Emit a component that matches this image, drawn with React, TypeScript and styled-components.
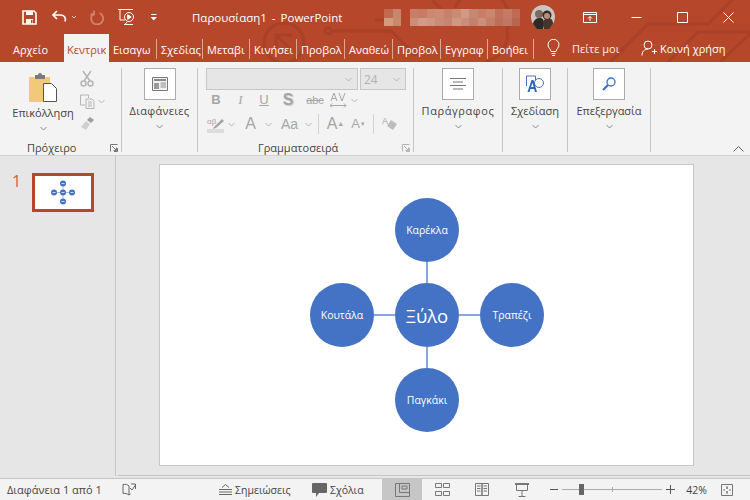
import React from "react";
import styled, { createGlobalStyle } from "styled-components";

const Global = createGlobalStyle`
  html, body { margin: 0; padding: 0; width: 750px; height: 500px; overflow: hidden; }
  body { font-family: "Open Sans", "Noto Sans", "Liberation Sans", sans-serif; font-size: 11px; color: #444; }
`;

const Window = styled.div`
  width: 750px;
  height: 500px;
  overflow: hidden;
  display: flex;
  flex-direction: column;
  background: #e6e6e6;
`;

const Head = styled.div`
  position: relative;
  height: 62px;
  flex: none;
  background: #b7472a;
  overflow: hidden;
`;
const Pattern = styled.svg`
  position: absolute;
  left: 0;
  top: 0;
`;
const TitleBar = styled.div`
  position: relative;
  height: 34px;
  display: flex;
  align-items: center;
  color: #fff;
`;
const Quick = styled.div<{ $gap: number }>`
  margin-left: ${(p) => p.$gap}px;
  flex: none;
  display: flex;
  align-items: center;
`;
const Title = styled.div`
  width: 192px;
  flex: none;
  margin-left: 34px;
  font-size: 11.5px;
  word-spacing: 2px;
  white-space: nowrap;
`;
const Blur = styled.svg`
  flex: none;
  margin-right: 11px;
`;
const Avatar = styled.svg`
  flex: none;
  margin-right: 12px;
`;
const WinBtn = styled.div`
  width: 46px;
  flex: none;
  display: flex;
  justify-content: center;
`;
const TabRow = styled.div`
  position: relative;
  height: 28px;
  display: flex;
  align-items: stretch;
  color: #fff;
`;
const FileTab = styled.div`
  width: 64px;
  padding-left: 13px;
  box-sizing: border-box;
  line-height: 31px;
  font-size: 11px;
`;
const Tab = styled.div<{ $w: number; $active?: boolean }>`
  width: ${(p) => p.$w}px;
  flex: none;
  box-sizing: border-box;
  overflow: hidden;
  white-space: nowrap;
  padding-left: ${(p) => (p.$active ? 3 : 4)}px;
  line-height: 31px;
  font-size: 11px;
  position: relative;
  background: ${(p) => (p.$active ? "#f3f3f3" : "transparent")};
  color: ${(p) => (p.$active ? "#b7472a" : "#fff")};
  &::after {
    content: "";
    position: absolute;
    right: 0;
    top: 5px;
    bottom: 3px;
    width: 1px;
    background: ${(p) => (p.$active ? "transparent" : "#e0a594")};
  }
`;
const Tell = styled.div`
  margin-left: 13px;
  display: flex;
  align-items: center;
  gap: 12px;
  width: 94px;
  flex: none;
  color: #fbeeea;
  white-space: nowrap;
`;
const Share = styled.div`
  display: flex;
  align-items: center;
  gap: 3px;
  white-space: nowrap;
`;

const Ribbon = styled.div`
  height: 94px;
  flex: none;
  box-sizing: border-box;
  background: #f3f3f3;
  border-bottom: 1px solid #d2d2d2;
  display: flex;
  position: relative;
  padding-top: 6px;
`;
const Group = styled.div<{ $w: number }>`
  width: ${(p) => p.$w}px;
  height: 84px;
  flex: none;
  box-sizing: border-box;
  border-right: 1px solid #c6c6c6;
  position: relative;
  display: flex;
  flex-direction: column;
  align-items: center;
`;
const BoxIcon = styled.div`
  width: 32px;
  height: 32px;
  box-sizing: border-box;
  background: #fff;
  border: 1px solid #ababab;
  display: flex;
  align-items: center;
  justify-content: center;
  flex: none;
`;
const BigLabel = styled.div<{ $track?: number }>`
  margin-top: 3px;
  line-height: 16px;
  font-size: 11px;
  letter-spacing: ${(p) => p.$track ?? 0}px;
  color: #444;
  white-space: nowrap;
`;
const LabelGap = styled.div<{ $h: number }>`
  height: ${(p) => p.$h}px;
  flex: none;
`;
const Chevron = styled.svg`
  display: block;
  flex: none;
`;
const GroupName = styled.div<{ $left: number }>`
  position: absolute;
  left: ${(p) => p.$left}px;
  bottom: -4px;
  line-height: 16px;
  font-size: 11px;
  color: #444;
  white-space: nowrap;
`;
const Launcher = styled.svg`
  position: absolute;
  right: 3px;
  bottom: 0;
`;
const ClipRow = styled.div`
  display: flex;
  width: 100%;
`;
const PasteCol = styled.div`
  width: 78px;
  margin-left: 4px;
  margin-right: -2px;
  display: flex;
  flex-direction: column;
  align-items: center;
  padding-top: 4px;
`;
const SmallCol = styled.div`
  display: flex;
  flex-direction: column;
  align-items: flex-start;
  gap: 7px;
  padding-top: 2px;
`;
const SmallRow = styled.div`
  display: flex;
  align-items: center;
  gap: 3px;
`;
const FontRows = styled.div`
  width: 100%;
  box-sizing: border-box;
  padding-left: 8px;
`;
const Combos = styled.div`
  display: flex;
  gap: 2px;
`;
const Combo = styled.div<{ $w: number }>`
  width: ${(p) => p.$w}px;
  height: 22px;
  box-sizing: border-box;
  background: #e6e6e6;
  border: 1px solid #c6c6c6;
  display: flex;
  align-items: center;
  justify-content: space-between;
  padding: 0 5px 0 3px;
  color: #b1b1b1;
  font-size: 12px;
`;
const ToolRow = styled.div<{ $h: number }>`
  height: ${(p) => p.$h}px;
  display: flex;
  align-items: center;
  color: #a6a6a6;
`;
const Tool = styled.div<{ $w: number; $size?: number }>`
  width: ${(p) => p.$w}px;
  flex: none;
  text-align: center;
  display: flex;
  justify-content: center;
  align-items: center;
  font-size: ${(p) => p.$size ?? 13}px;
  font-family: "Liberation Sans", sans-serif;
  line-height: 16px;
`;
const Struck = styled.span`
  font-size: 11px;
  text-decoration: line-through;
`;
const SerifItalic = styled.i`
  font-family: "Liberation Serif", serif;
`;
const Shadowed = styled.b`
  text-shadow: 1px 1px 1px #c9c9c9;
`;
const Mark = styled.sup<{ $size: number }>`
  font-size: ${(p) => p.$size}px;
`;
const ToolSpace = styled.div<{ $w: number }>`
  width: ${(p) => p.$w}px;
  flex: none;
`;
const ToolSep = styled.div`
  width: 1px;
  height: 20px;
  background: #d2d2d2;
  flex: none;
`;
const Collapse = styled.svg`
  position: absolute;
  right: 6px;
  bottom: 3px;
`;

const Body = styled.div`
  flex: 1;
  display: flex;
  min-height: 0;
`;
const Thumbs = styled.div`
  width: 116px;
  flex: none;
  box-sizing: border-box;
  border-right: 1px solid #c6c6c6;
  display: flex;
  align-items: flex-start;
  padding-top: 17px;
  height: 320px;
`;
const SlideNo = styled.div`
  width: 32px;
  box-sizing: border-box;
  padding-left: 12px;
  font-size: 16px;
  line-height: 16px;
  color: #cf6044;
`;
const Thumb = styled.div`
  width: 62px;
  height: 39px;
  box-sizing: border-box;
  border: 3px solid #b7472a;
  background: #fff;
  display: flex;
  align-items: center;
  justify-content: center;
`;
const Stage = styled.div`
  flex: 1;
  padding: 8px 0 0 43px;
  display: flex;
  flex-direction: column;
  align-items: flex-start;
`;
const Slide = styled.div`
  width: 535px;
  height: 302px;
  box-sizing: border-box;
  flex: none;
  background: #fff;
  border: 1px solid #c6c6c6;
  display: flex;
  justify-content: center;
  padding-top: 33px;
  padding-left: 1px;
`;
const Diagram = styled.div`
  position: relative;
  width: 234px;
  height: 234px;
  flex: none;
`;
const Link = styled.div<{ $x: number; $y: number; $w: number; $h: number }>`
  position: absolute;
  left: ${(p) => p.$x}px;
  top: ${(p) => p.$y}px;
  width: ${(p) => p.$w}px;
  height: ${(p) => p.$h}px;
  background: #8aa5d8;
`;
const Node = styled.div<{ $x: number; $y: number; $big?: boolean }>`
  position: absolute;
  left: ${(p) => p.$x}px;
  top: ${(p) => p.$y}px;
  width: 64px;
  height: 64px;
  border-radius: 50%;
  background: #4472c4;
  color: #fff;
  display: flex;
  align-items: center;
  justify-content: center;
  font-size: ${(p) => (p.$big ? 18.5 : 10.5)}px;
`;
const ScrollRule = styled.div`
  height: 1px;
  margin-top: 9px;
  margin-left: -41px;
  width: 632px;
  background: #c6c6c6;
  flex: none;
`;
const Status = styled.div`
  height: 22px;
  flex: none;
  box-sizing: border-box;
  border-top: 1px solid #c6c6c6;
  background: #f3f3f3;
  display: flex;
  align-items: center;
  font-size: 10.5px;
  color: #444;
`;
const StatusText = styled.div<{ $w: number; $size?: number; $pad?: number; $end?: boolean }>`
  width: ${(p) => p.$w}px;
  flex: none;
  box-sizing: border-box;
  white-space: nowrap;
  display: flex;
  align-items: center;
  gap: 3px;
  font-size: ${(p) => p.$size ?? 10.5}px;
  padding-left: ${(p) => p.$pad ?? 0}px;
  justify-content: ${(p) => (p.$end ? "flex-end" : "flex-start")};
`;
const View = styled.div<{ $active?: boolean }>`
  width: 40px;
  height: 21px;
  flex: none;
  display: flex;
  align-items: center;
  justify-content: center;
  background: ${(p) => (p.$active ? "#c6c6c6" : "transparent")};
`;
const ZoomOut = styled.svg`
  margin-left: 8px;
  flex: none;
`;
const Slider = styled.div`
  position: relative;
  width: 100px;
  height: 1px;
  background: #ababab;
  flex: none;
  margin: 0 4px;
`;
const SliderThumb = styled.div`
  position: absolute;
  left: 17px;
  top: -5px;
  width: 5px;
  height: 11px;
  background: #666;
`;
const SliderTick = styled.div`
  position: absolute;
  left: 50px;
  top: -2px;
  width: 1px;
  height: 5px;
  background: #ababab;
`;
const FitIcon = styled.svg`
  margin-left: 14px;
  flex: none;
`;

const Down = ({ c = "#8a8a8a" }: { c?: string }) => (
  <Chevron width="7" height="5" viewBox="0 0 7 5">
    <path d="M.5 1l3 3 3-3" fill="none" stroke={c} />
  </Chevron>
);

const Corner = ({ c }: { c: string }) => (
  <Launcher width="8" height="8" viewBox="0 0 8 8" fill="none" stroke={c}>
    <path d="M.5 7.500v-7h7M2 2l4.500 4.500M3.500 6.500h3v-3M7.500 4v3.500H4" />
  </Launcher>
);

const blurCells = [
  "#c06a4f", "#c8856c", "#b7472a", "#c87f68", "#c97a62", "#cc8873", "#cd8b76", "#c9806a",
  "#cc8a74", "#d09a87", "#c98673", "#c87d67", "#cb8672", "#c17059", "#c47a65", "#be6a54",
  "#d29a7e", "#c98a6c", "#b7472a", "#cd8d79", "#d09b88", "#cf9582", "#cb8a76", "#c9846f",
  "#cf9885", "#cb8d7a", "#c6816c", "#cb8f7c", "#c67e69", "#be6f5a", "#c17763", "#b96650",
];

const tabs: [string, number, boolean?][] = [
  ["Κεντρικ", 45, true],
  ["Εισαγω", 48],
  ["Σχεδίας", 46],
  ["Μεταβι", 47],
  ["Κινήσει", 47],
  ["Προβολ", 48],
  ["Αναθεώ", 48],
  ["Προβολ", 48],
  ["Εγγραφ", 47],
  ["Βοήθει", 46],
];

export default function App() {
  return (
    <Window>
      <Global />
      <Head>
        <Pattern width="750" height="62" viewBox="0 0 750 62" fill="none" stroke="#a84127" strokeWidth="3">
          <circle cx="284" cy="43" r="20" />
          <path d="M276 51V35h16M277 36l15 15" />
          <circle cx="328" cy="31" r="3" />
          <path d="M331 31h60l25 25M375 20h50M432 0l20 20M455 8a28 28 0 0 1 52 22 28 28 0 0 1-22 32" />
          <path d="M610 62l38-38h60l30-30M668 62l30-30h52M720 62l30-28" />
        </Pattern>
        <TitleBar>
          <Quick $gap={22}>
            <svg width="15" height="15" viewBox="0 0 15 15">
              <path d="M1 1h11l2 2v11H1z" fill="none" stroke="#fff" strokeWidth="1.6" />
              <path d="M4 1h7v4H4zM4 9h7v5H4z" fill="#fff" />
              <path d="M9 10h1.5v3H9z" fill="#b7472a" />
            </svg>
          </Quick>
          <Quick $gap={14}>
            <svg width="26" height="16" viewBox="0 0 26 16" fill="none" stroke="#fff">
              <path d="M6 2L2 6l4 4M2 6h8a4.5 4.5 0 0 1 4 6.5" strokeWidth="1.7" />
              <path d="M21 7l2 2 2-2" stroke="#e7c2b6" />
            </svg>
          </Quick>
          <Quick $gap={13}>
            <svg width="15" height="15" viewBox="0 0 15 15" fill="none" stroke="#d2846f" strokeWidth="1.8">
              <path d="M9.5 3A6 6 0 1 1 4 3.4M4 .5v4H.5" />
            </svg>
          </Quick>
          <Quick $gap={13}>
            <svg width="19" height="19" viewBox="0 0 19 19" fill="none" stroke="#fff">
              <path d="M0 1.5h15M2 2v10h5M6 16.5h9" />
              <circle cx="11" cy="9" r="4.5" />
              <path d="M9.7 6.7l3.5 2.3-3.5 2.3z" fill="#fff" />
              <path d="M9 14l-2 2.5" />
            </svg>
          </Quick>
          <Quick $gap={13}>
            <svg width="8" height="8" viewBox="0 0 8 8">
              <path d="M1 1h5.5v1H1zM.5 4h6.500L3.700 7.500z" fill="#fff" />
            </svg>
          </Quick>
          <Title>Παρουσίαση1 - PowerPoint</Title>
          <Blur width="136" height="17" viewBox="0 0 136 17" shapeRendering="crispEdges">
            {blurCells.map((c, i) => (
              <rect key={i} x={(i % 16) * 8.5} y={Math.floor(i / 16) * 8.5} width="8.5" height="8.5" fill={c} />
            ))}
          </Blur>
          <Avatar width="24" height="24" viewBox="0 0 24 24">
            <circle cx="12" cy="12" r="12" fill="#c9c6c3" />
            <path d="M2 19c1-5 4-6 7-6 3 0 4 2 4 6l-1 5H6z" fill="#2d2926" />
            <path d="M12 20c0-5 2-7 5-7s5 2 5 6l-4 5h-5z" fill="#46352c" />
            <circle cx="8" cy="9" r="4" fill="#7c6a5d" />
            <circle cx="16" cy="10" r="4.5" fill="#3b2a23" />
            <circle cx="16" cy="11" r="3" fill="#b98e7a" />
          </Avatar>
          <WinBtn>
            <svg width="14" height="11" viewBox="0 0 14 11" fill="none" stroke="#fff">
              <path d="M.5.5h13v10H.5zM.5 2.5h13M7 9V4.5M5 6.5l2-2 2 2" />
            </svg>
          </WinBtn>
          <WinBtn>
            <svg width="11" height="11" viewBox="0 0 11 11">
              <path d="M.5 5.5h10" stroke="#fff" />
            </svg>
          </WinBtn>
          <WinBtn>
            <svg width="11" height="11" viewBox="0 0 11 11">
              <path d="M.5.5h10v10H.5z" fill="none" stroke="#fff" />
            </svg>
          </WinBtn>
          <WinBtn>
            <svg width="11" height="11" viewBox="0 0 11 11">
              <path d="M.5.5l10 10M10.5.5l-10 10" stroke="#fff" />
            </svg>
          </WinBtn>
        </TitleBar>
        <TabRow>
          <FileTab>Αρχείο</FileTab>
          {tabs.map(([name, w, active], i) => (
            <Tab key={i} $w={w} $active={active}>
              {name}
            </Tab>
          ))}
          <Tell>
            <svg width="13" height="18" viewBox="0 0 13 18" fill="none" stroke="#fff">
              <path d="M4 12.5C4 10 1 9 1 5.8a5.5 5.5 0 0 1 11 0C12 9 9 10 9 12.5zM4.5 14.5h4M5 16.5h3" />
            </svg>
            Πείτε μοι
          </Tell>
          <Share>
            <svg width="16" height="16" viewBox="0 0 16 16" fill="none" stroke="#fff">
              <circle cx="7" cy="5" r="4" />
              <path d="M1 15.5c0-4 2-6 6-6.500M11 11.500h5M13.500 9v5" />
            </svg>
            Κοινή χρήση
          </Share>
        </TabRow>
      </Head>

      <Ribbon>
        <Group $w={122}>
          <ClipRow>
            <PasteCol>
              <svg width="28" height="30" viewBox="0 0 28 30">
                <path d="M0 5h21v25H0z" fill="#f2c879" />
                <path d="M6 3h3a2 2 0 0 1 4 0h3v4H6z" fill="#7b7b7b" />
                <path d="M14.500 11.500h8l5 5v13h-13z" fill="#fff" stroke="#555" />
              </svg>
              <BigLabel>Επικόλληση</BigLabel>
              <LabelGap $h={5} />
              <Down />
            </PasteCol>
            <SmallCol>
              <SmallRow>
                <svg width="14" height="17" viewBox="0 0 14 17" fill="none" stroke="#b5b5b5" strokeWidth="1.500">
                  <path d="M3 1l7 10M11 1L4 11" />
                  <circle cx="3.500" cy="13.500" r="2.500" />
                  <circle cx="10.500" cy="13.500" r="2.500" />
                </svg>
              </SmallRow>
              <SmallRow>
                <svg width="15" height="15" viewBox="0 0 15 15" fill="none" stroke="#b5b5b5">
                  <path d="M.5 1h8v3M.5 1v10H5M6 5h6l2 2v7.500H6zM8 8h4M8 10h4M8 12h4" />
                </svg>
                <Down c="#b5b5b5" />
              </SmallRow>
              <SmallRow>
                <svg width="16" height="15" viewBox="0 0 16 15">
                  <path d="M10 1l4 3-3 3-4-3z" fill="#9f9f9f" />
                  <path d="M6 5l4 3-4 6-5-3z" fill="#d0d0d0" />
                </svg>
              </SmallRow>
            </SmallCol>
          </ClipRow>
          <GroupName $left={27}>Πρόχειρο</GroupName>
          <Corner c="#777" />
        </Group>

        <Group $w={76}>
          <BoxIcon>
            <svg width="16" height="14" viewBox="0 0 16 14">
              <path d="M.5.5h15v13H.5z" fill="#f3f3f3" stroke="#777" />
              <path d="M2 2h12v2H2z" fill="#888" />
              <path d="M2 6h5v6H2z" fill="#999" />
              <path d="M8.500 6H14M8.500 8H14M8.500 10H14" stroke="#888" />
            </svg>
          </BoxIcon>
          <BigLabel $track={0.3}>Διαφάνειες</BigLabel>
          <LabelGap $h={5} />
          <Down />
        </Group>

        <Group $w={216}>
          <FontRows>
            <Combos>
              <Combo $w={152}>
                <span />
                <Down c="#b5b5b5" />
              </Combo>
              <Combo $w={46}>
                24
                <Down c="#b5b5b5" />
              </Combo>
            </Combos>
            <ToolRow $h={20}>
              <Tool $w={20}>
                <b>B</b>
              </Tool>
              <Tool $w={29}>
                <SerifItalic>I</SerifItalic>
              </Tool>
              <Tool $w={18}>
                <u>U</u>
              </Tool>
              <Tool $w={30} $size={16}>
                <Shadowed>S</Shadowed>
              </Tool>
              <Tool $w={24}>
                <Struck>abc</Struck>
              </Tool>
              <Tool $w={22}>
                <svg width="17" height="16" viewBox="0 0 17 16" fill="none" stroke="#a6a6a6">
                  <path d="M1 9l3-8 3 8M2 6.500h4M9 1l3 8 3-8M0 13.500h16M2 11.500l-2 2 2 2M14 11.500l2 2-2 2" />
                </svg>
              </Tool>
              <ToolSpace $w={2} />
              <Down c="#b5b5b5" />
            </ToolRow>
            <ToolRow $h={28}>
              <Tool $w={20}>
                <svg width="18" height="17" viewBox="0 0 18 17">
                  <text x="0" y="8" fontSize="8" fill="#a6a6a6" fontFamily="Liberation Sans">αβ</text>
                  <path d="M7 11L15 3l2 2-8 7-3 1z" fill="#a6a6a6" />
                  <path d="M0 13h17v4H0z" fill="#dcdcdc" />
                </svg>
              </Tool>
              <Tool $w={11}>
                <Down c="#b5b5b5" />
              </Tool>
              <Tool $w={27} $size={16}>
                A
              </Tool>
              <Tool $w={9}>
                <Down c="#b5b5b5" />
              </Tool>
              <Tool $w={33} $size={14}>
                Aa
              </Tool>
              <Tool $w={4}>
                <Down c="#b5b5b5" />
              </Tool>
              <ToolSpace $w={8} />
              <ToolSep />
              <Tool $w={33} $size={16}>
                A<Mark $size={7}>▲</Mark>
              </Tool>
              <Tool $w={13}>
                A<Mark $size={6}>▼</Mark>
              </Tool>
              <ToolSpace $w={8} />
              <ToolSep />
              <Tool $w={32}>
                <svg width="16" height="16" viewBox="0 0 16 16">
                  <text x="0" y="8" fontSize="9" fill="#a6a6a6" fontFamily="Liberation Sans">A</text>
                  <path d="M9 4l6 4-4 6-6-4z" fill="#bdbdbd" />
                </svg>
              </Tool>
            </ToolRow>
          </FontRows>
          <GroupName $left={60}>Γραμματοσειρά</GroupName>
          <Corner c="#b5b5b5" />
        </Group>

        <Group $w={89}>
          <BoxIcon>
            <svg width="16" height="12" viewBox="0 0 16 12" stroke="#777">
              <path d="M0 .5h16M3 4h10M0 7.500h16M3 11h10" />
            </svg>
          </BoxIcon>
          <BigLabel $track={0.6}>Παράγραφος</BigLabel>
          <LabelGap $h={5} />
          <Down />
        </Group>

        <Group $w={65}>
          <BoxIcon>
            <svg width="18" height="18" viewBox="0 0 18 18">
              <path d="M.5 1h9v4M.5 1v10" fill="none" stroke="#4472c4" />
              <circle cx="13" cy="8" r="4.500" fill="#fff" stroke="#4472c4" />
              <path d="M1.500 17L5.500 5h2L11 17H9l-.8-3H4.400l-.8 3zM5 12h2.600L6.500 8z" fill="#2f65b8" />
            </svg>
          </BoxIcon>
          <BigLabel>Σχεδίαση</BigLabel>
          <LabelGap $h={5} />
          <Down />
        </Group>

        <Group $w={83}>
          <BoxIcon>
            <svg width="14" height="14" viewBox="0 0 14 14" fill="none" stroke="#3a70c4">
              <circle cx="9" cy="5" r="4" strokeWidth="1.300" />
              <path d="M6 8l-5 5" strokeWidth="2.200" />
            </svg>
          </BoxIcon>
          <BigLabel>Επεξεργασία</BigLabel>
          <LabelGap $h={5} />
          <Down />
        </Group>

        <Collapse width="11" height="6" viewBox="0 0 11 6" fill="none" stroke="#666">
          <path d="M.5 5.500l5-5 5 5" />
        </Collapse>
      </Ribbon>

      <Body>
        <Thumbs>
          <SlideNo>1</SlideNo>
          <Thumb>
            <svg width="26" height="25" viewBox="0 0 26 25">
              <path d="M13 4v17M4 12.500h18" stroke="#a9bde3" />
              {[[13, 3.500], [4, 12.500], [13, 12.500], [22, 12.500], [13, 21.500]].map(([x, y], i) => (
                <g key={i}>
                  <circle cx={x} cy={y} r="3" fill="#4472c4" />
                  <path d={`M${x - 1.500} ${y}h3`} stroke="#cfdaf0" />
                </g>
              ))}
            </svg>
          </Thumb>
        </Thumbs>
        <Stage>
          <Slide>
            <Diagram>
              <Link $x={116} $y={64} $w={2} $h={21} />
              <Link $x={116} $y={149} $w={2} $h={21} />
              <Link $x={64} $y={116} $w={21} $h={2} />
              <Link $x={149} $y={116} $w={21} $h={2} />
              <Node $x={85} $y={0}>Καρέκλα</Node>
              <Node $x={0} $y={85}>Κουτάλα</Node>
              <Node $x={85} $y={85} $big>Ξύλο</Node>
              <Node $x={170} $y={85}>Τραπέζι</Node>
              <Node $x={85} $y={170}>Παγκάκι</Node>
            </Diagram>
          </Slide>
          <ScrollRule />
        </Stage>
      </Body>

      <Status>
        <StatusText $w={122} $size={11} $pad={7}>
          Διαφάνεια 1 από 1
        </StatusText>
        <StatusText $w={97}>
          <svg width="14" height="13" viewBox="0 0 14 13" fill="none" stroke="#666">
            <path d="M7 3C6 1.500 3 1 1 1.500v9c2-.5 4 0 6 1.500M7 3v9M7 12c.5-.4 1-.7 1.500-1M9 1h4.500v5M8 5l2 2 3.500-5" />
          </svg>
        </StatusText>
        <StatusText $w={93}>
          <svg width="13" height="11" viewBox="0 0 13 11" stroke="#666" fill="none">
            <path d="M3 3.500l3.500-3 3.500 3M0 5.500h13M0 8h13M0 10.500h13" />
          </svg>
          Σημειώσεις
        </StatusText>
        <StatusText $w={70}>
          <svg width="15" height="14" viewBox="0 0 15 14">
            <path d="M1 0h13a1 1 0 0 1 1 1v8a1 1 0 0 1-1 1H7l-3 4v-4H1a1 1 0 0 1-1-1V1a1 1 0 0 1 1-1z" fill="#666" />
          </svg>
          Σχόλια
        </StatusText>
        <View $active>
          <svg width="15" height="14" viewBox="0 0 15 14" fill="none" stroke="#777">
            <path d="M.5.5h14v13H.5zM4.500.5v9h10M7 3h5v3H7z" />
          </svg>
        </View>
        <View>
          <svg width="15" height="13" viewBox="0 0 15 13" fill="none" stroke="#777">
            <path d="M.5.5h6v4h-6zM8.500.5h6v4h-6zM.5 8.500h6v4h-6zM8.500 8.500h6v4h-6z" />
          </svg>
        </View>
        <View>
          <svg width="14" height="14" viewBox="0 0 14 14" fill="none" stroke="#777">
            <path d="M.5.5H7v12H.5zM7 .5h6.500v12H7zM2 3h3.500M2 5.500h3.500M2 8h3.500M8.500 3H12M8.500 5.500H12M8.500 8H12" />
          </svg>
        </View>
        <View>
          <svg width="14" height="14" viewBox="0 0 14 14" fill="none" stroke="#777">
            <path d="M0 1h14" strokeWidth="2" />
            <path d="M1.500 1.500v6h11v-6M7 7.500v6M3.500 13.500h7" />
          </svg>
        </View>
        <ZoomOut width="8" height="3" viewBox="0 0 8 3">
          <path d="M0 1.500h8" stroke="#555" />
        </ZoomOut>
        <Slider>
          <SliderThumb />
          <SliderTick />
        </Slider>
        <svg width="9" height="9" viewBox="0 0 9 9">
          <path d="M0 4.500h9M4.500 0v9" stroke="#555" />
        </svg>
        <StatusText $w={32} $end>42%</StatusText>
        <FitIcon width="12" height="12" viewBox="0 0 12 12" fill="none" stroke="#777">
          <path d="M.5.5h11v11H.5zM6 2v3M5 4h2M6 7v3M5 8h2M2 6h2M8 6h2" />
        </FitIcon>
      </Status>
    </Window>
  );
}
